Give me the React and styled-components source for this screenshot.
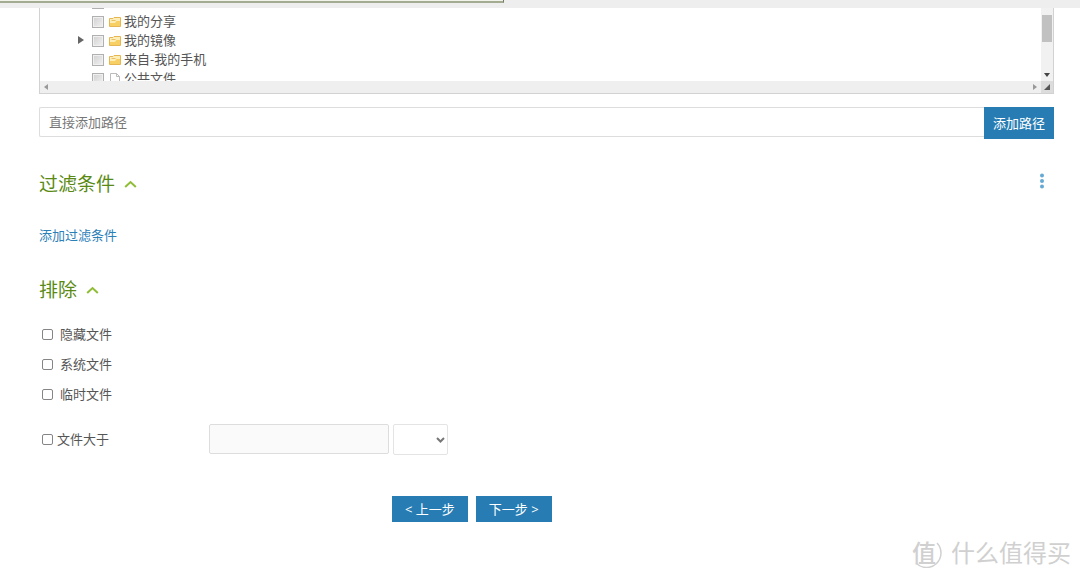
import React from "react";
import styled, { createGlobalStyle } from "styled-components";

const Global = createGlobalStyle`
  *, *::before, *::after { box-sizing: border-box; }
  body {
    margin: 0;
    background: #fff;
    color: #555;
    font: 13px/20px "Open Sans", "Noto Sans CJK SC", sans-serif;
  }
  button, input, select { font: inherit; color: inherit; margin: 0; }
`;

const Page = styled.div`
  min-height: 100vh;
  position: relative;
`;

const TopStrip = styled.header`
  position: relative;
  height: 8px;
  background: #eee;
`;

const StatusBubble = styled.div`
  position: absolute;
  left: 0;
  top: 0;
  width: 504px;
  height: 3px;
  background: #f2f3ea;
  border-right: 1px solid #6f7464;
  border-bottom: 2px solid #a3ab90;
`;

const Content = styled.main`
  padding: 0 26px 0 39px;
`;

const TreePanel = styled.section`
  display: grid;
  grid-template-columns: 1fr 12px;
  grid-template-rows: 73px 12px;
  border: 1px solid #d2d2d2;
  border-top: 0;
`;

const TreeView = styled.ul`
  display: flex;
  flex-direction: column;
  justify-content: flex-end;
  list-style: none;
  margin: 0;
  padding: 0 0 0 38px;
  height: 79px;
`;

const TreeClip = styled.div`
  overflow: hidden;
`;

const TreeRow = styled.li`
  display: flex;
  align-items: center;
  flex: none;
  height: 19px;
`;

const Expander = styled.span`
  display: flex;
  width: 14px;
`;

const TreeItem = styled.label`
  display: flex;
  align-items: center;
  svg { margin: 2px 3px 0 5px; }
`;

const TreeCheck = styled.input`
  appearance: none;
  width: 12px;
  height: 12px;
  margin-top: 3px;
  border: 1px solid #b0b0b0;
  background: linear-gradient(135deg, #d0d0d0, #f2f2f2);
  box-shadow: inset 0 0 0 1px #f0f0f0;
`;

const VerticalBar = styled.div`
  display: flex;
  flex-direction: column;
  align-items: center;
  justify-content: space-between;
  padding: 7px 0 4px;
  background: #f1f1f1;
`;

const Thumb = styled.div`
  width: 10px;
  height: 27px;
  background: #c1c1c1;
`;

const HorizontalBar = styled.div`
  display: flex;
  align-items: center;
  justify-content: space-between;
  padding: 0 4px;
  background: #efefef;
`;

const Corner = styled.div`
  display: flex;
  align-items: center;
  justify-content: center;
  background: #dcdcdc;
`;

const PathForm = styled.form`
  display: flex;
  align-items: flex-start;
  margin-top: 13px;
`;

const PathInput = styled.input`
  flex: 1;
  min-width: 0;
  height: 30px;
  padding: 0 9px;
  border: 1px solid #ddd;
  border-right: 0;
  border-radius: 2px 0 0 2px;
  background: #fff;
  &::placeholder { color: #777; opacity: 1; }
`;

const Button = styled.button`
  height: ${(p) => (p.$tall ? 32 : 26)}px;
  padding: 0 ${(p) => (p.$tall ? 9 : 13)}px;
  border: 0;
  background: #277db3;
  color: #fff;
  white-space: nowrap;
  cursor: pointer;
`;

const SectionHead = styled.div`
  display: flex;
  align-items: center;
  justify-content: space-between;
  height: 28px;
  margin-top: 31px;
`;

const Title = styled.h2`
  display: flex;
  align-items: center;
  gap: 9px;
  margin: 0;
  color: #5a8a14;
  font-size: 19px;
  font-weight: 400;
  line-height: 28px;
`;

const MenuButton = styled.button`
  display: flex;
  margin-right: 9px;
  padding: 0 0 6px;
  border: 0;
  background: none;
`;

const AddFilter = styled.a`
  display: inline-block;
  margin-top: 27px;
  color: #2b80b8;
  text-decoration: none;
`;

const OptionList = styled.div`
  display: flex;
  flex-direction: column;
  gap: 10px;
  margin-top: 20px;
`;

const Option = styled.label`
  display: flex;
  align-items: center;
  gap: ${(p) => (p.$tight ? 4 : 7)}px;
  padding-left: 3px;
`;

const Check = styled.input`
  appearance: none;
  width: 11px;
  height: 11px;
  border: 1px solid #858585;
  border-radius: 2px;
  background: #fff;
`;

const SizeRow = styled.div`
  display: flex;
  align-items: flex-start;
  gap: 4px;
  margin-top: 20px;
`;

const SizeLabel = styled.div`
  width: 166px;
  padding-top: 5px;
`;

const SizeInput = styled.input`
  width: 180px;
  height: 30px;
  border: 1px solid #ddd;
  border-radius: 2px;
  background: #fafafa;
`;

const UnitBox = styled.div`
  display: grid;
  align-items: center;
  > * { grid-area: 1 / 1; }
  svg { justify-self: end; margin-right: 3px; pointer-events: none; }
`;

const UnitSelect = styled.select`
  appearance: none;
  width: 55px;
  height: 31px;
  border: 1px solid #e4e4e4;
  border-radius: 2px;
  background: #fff;
`;

const Steps = styled.nav`
  display: flex;
  gap: 8px;
  margin-top: 41px;
  padding-left: 353px;
`;

const Watermark = styled.div`
  position: absolute;
  right: 9px;
  bottom: 10px;
  display: flex;
  align-items: center;
  gap: 9px;
  color: #d0d0d0;
  font-size: 24px;
  line-height: 32px;
`;

const Seal = styled.span`
  display: grid;
  align-items: center;
  justify-items: start;
  font-weight: 500;
  > * { grid-area: 1 / 1; }
`;

const Folder = () => (
  <svg width="12" height="12" viewBox="0 0 12 12" aria-hidden="true">
    <path d="M.5 10.500v-8h3.500l1-1h6.500v9z" fill="#fdeeb8" stroke="#e6b652" />
    <path d="M1 10V7h5l1.500-2H11V10z" fill="#f8cf62" />
    <path d="M2.500 4.500h4" stroke="#e9c065" />
  </svg>
);

const FileIcon = () => (
  <svg width="12" height="12" viewBox="0 0 12 12" aria-hidden="true">
    <path d="M1.500 12V.5h6l3 3V12M7.500.5v3h3" fill="#fff" stroke="#bbb" />
  </svg>
);

const Triangle = ({ d, color, w = 6, h = 6 }) => (
  <svg width={w} height={h} viewBox={`0 0 ${w} ${h}`} aria-hidden="true">
    <path d={d} fill={color} />
  </svg>
);

const Chevron = () => (
  <svg width="13" height="8" viewBox="0 0 13 8" fill="none" aria-hidden="true">
    <path d="M1.200 7l5.300-5 5.300 5" stroke="#8fbd35" strokeWidth="2" />
  </svg>
);

const rows = [
  { name: "", folder: true },
  { name: "我的分享", folder: true },
  { name: "我的镜像", folder: true, open: true },
  { name: "来自-我的手机", folder: true },
  { name: "公共文件", folder: false },
];

const excluded = ["隐藏文件", "系统文件", "临时文件"];

export default function App() {
  return (
    <Page>
      <Global />
      <TopStrip><StatusBubble /></TopStrip>
      <Content>
        <TreePanel>
          <TreeClip>
            <TreeView>
              {rows.map((row, i) => (
                <TreeRow key={i}>
                  <Expander>
                    {row.open && <Triangle w={6} h={8} d="M0 0l6 4-6 4z" color="#666" />}
                  </Expander>
                  <TreeItem>
                    <TreeCheck type="checkbox" />
                    {row.folder ? <Folder /> : <FileIcon />}
                    {row.name}
                  </TreeItem>
                </TreeRow>
              ))}
            </TreeView>
          </TreeClip>
          <VerticalBar>
            <Thumb />
            <Triangle w={6} h={4} d="M0 0h6l-3 4z" color="#444" />
          </VerticalBar>
          <HorizontalBar>
            <Triangle w={4} h={6} d="M4 0v6l-4-3z" color="#999" />
            <Triangle w={4} h={6} d="M0 0v6l4-3z" color="#999" />
          </HorizontalBar>
          <Corner><Triangle d="M6 0v6h-6z" color="#555" /></Corner>
        </TreePanel>

        <PathForm onSubmit={(e) => e.preventDefault()}>
          <PathInput type="text" placeholder="直接添加路径" aria-label="直接添加路径" />
          <Button $tall>添加路径</Button>
        </PathForm>

        <SectionHead>
          <Title>过滤条件 <Chevron /></Title>
          <MenuButton type="button" aria-haspopup="menu">
            <svg width="6" height="16" viewBox="0 0 6 16" fill="#66a9d4" aria-hidden="true">
              <circle cx="3" cy="2.500" r="2" />
              <circle cx="3" cy="8" r="2" />
              <circle cx="3" cy="13.500" r="2" />
            </svg>
          </MenuButton>
        </SectionHead>
        <AddFilter href="#filter">添加过滤条件</AddFilter>

        <SectionHead>
          <Title>排除 <Chevron /></Title>
        </SectionHead>
        <OptionList>
          {excluded.map((name) => (
            <Option key={name}><Check type="checkbox" />{name}</Option>
          ))}
        </OptionList>
        <SizeRow>
          <SizeLabel>
            <Option $tight><Check type="checkbox" />文件大于</Option>
          </SizeLabel>
          <SizeInput type="text" aria-label="文件大于" disabled />
          <UnitBox>
            <UnitSelect aria-label="单位" />
            <svg width="9" height="6" viewBox="0 0 9 6" fill="none" aria-hidden="true">
              <path d="M1 1l3.500 3.500L8 1" stroke="#777" strokeWidth="2" />
            </svg>
          </UnitBox>
        </SizeRow>

        <Steps>
          <Button type="button">&lt; 上一步</Button>
          <Button type="button">下一步 &gt;</Button>
        </Steps>
      </Content>
      <Watermark>
        <Seal>
          <svg width="30" height="30" viewBox="0 0 30 30" fill="none" aria-hidden="true">
            <path d="M25 5A13.500 13.500 0 0 1 4 25" stroke="#d0d0d0" strokeWidth="1.500" />
          </svg>
          <span>值</span>
        </Seal>
        什么值得买
      </Watermark>
    </Page>
  );
}
